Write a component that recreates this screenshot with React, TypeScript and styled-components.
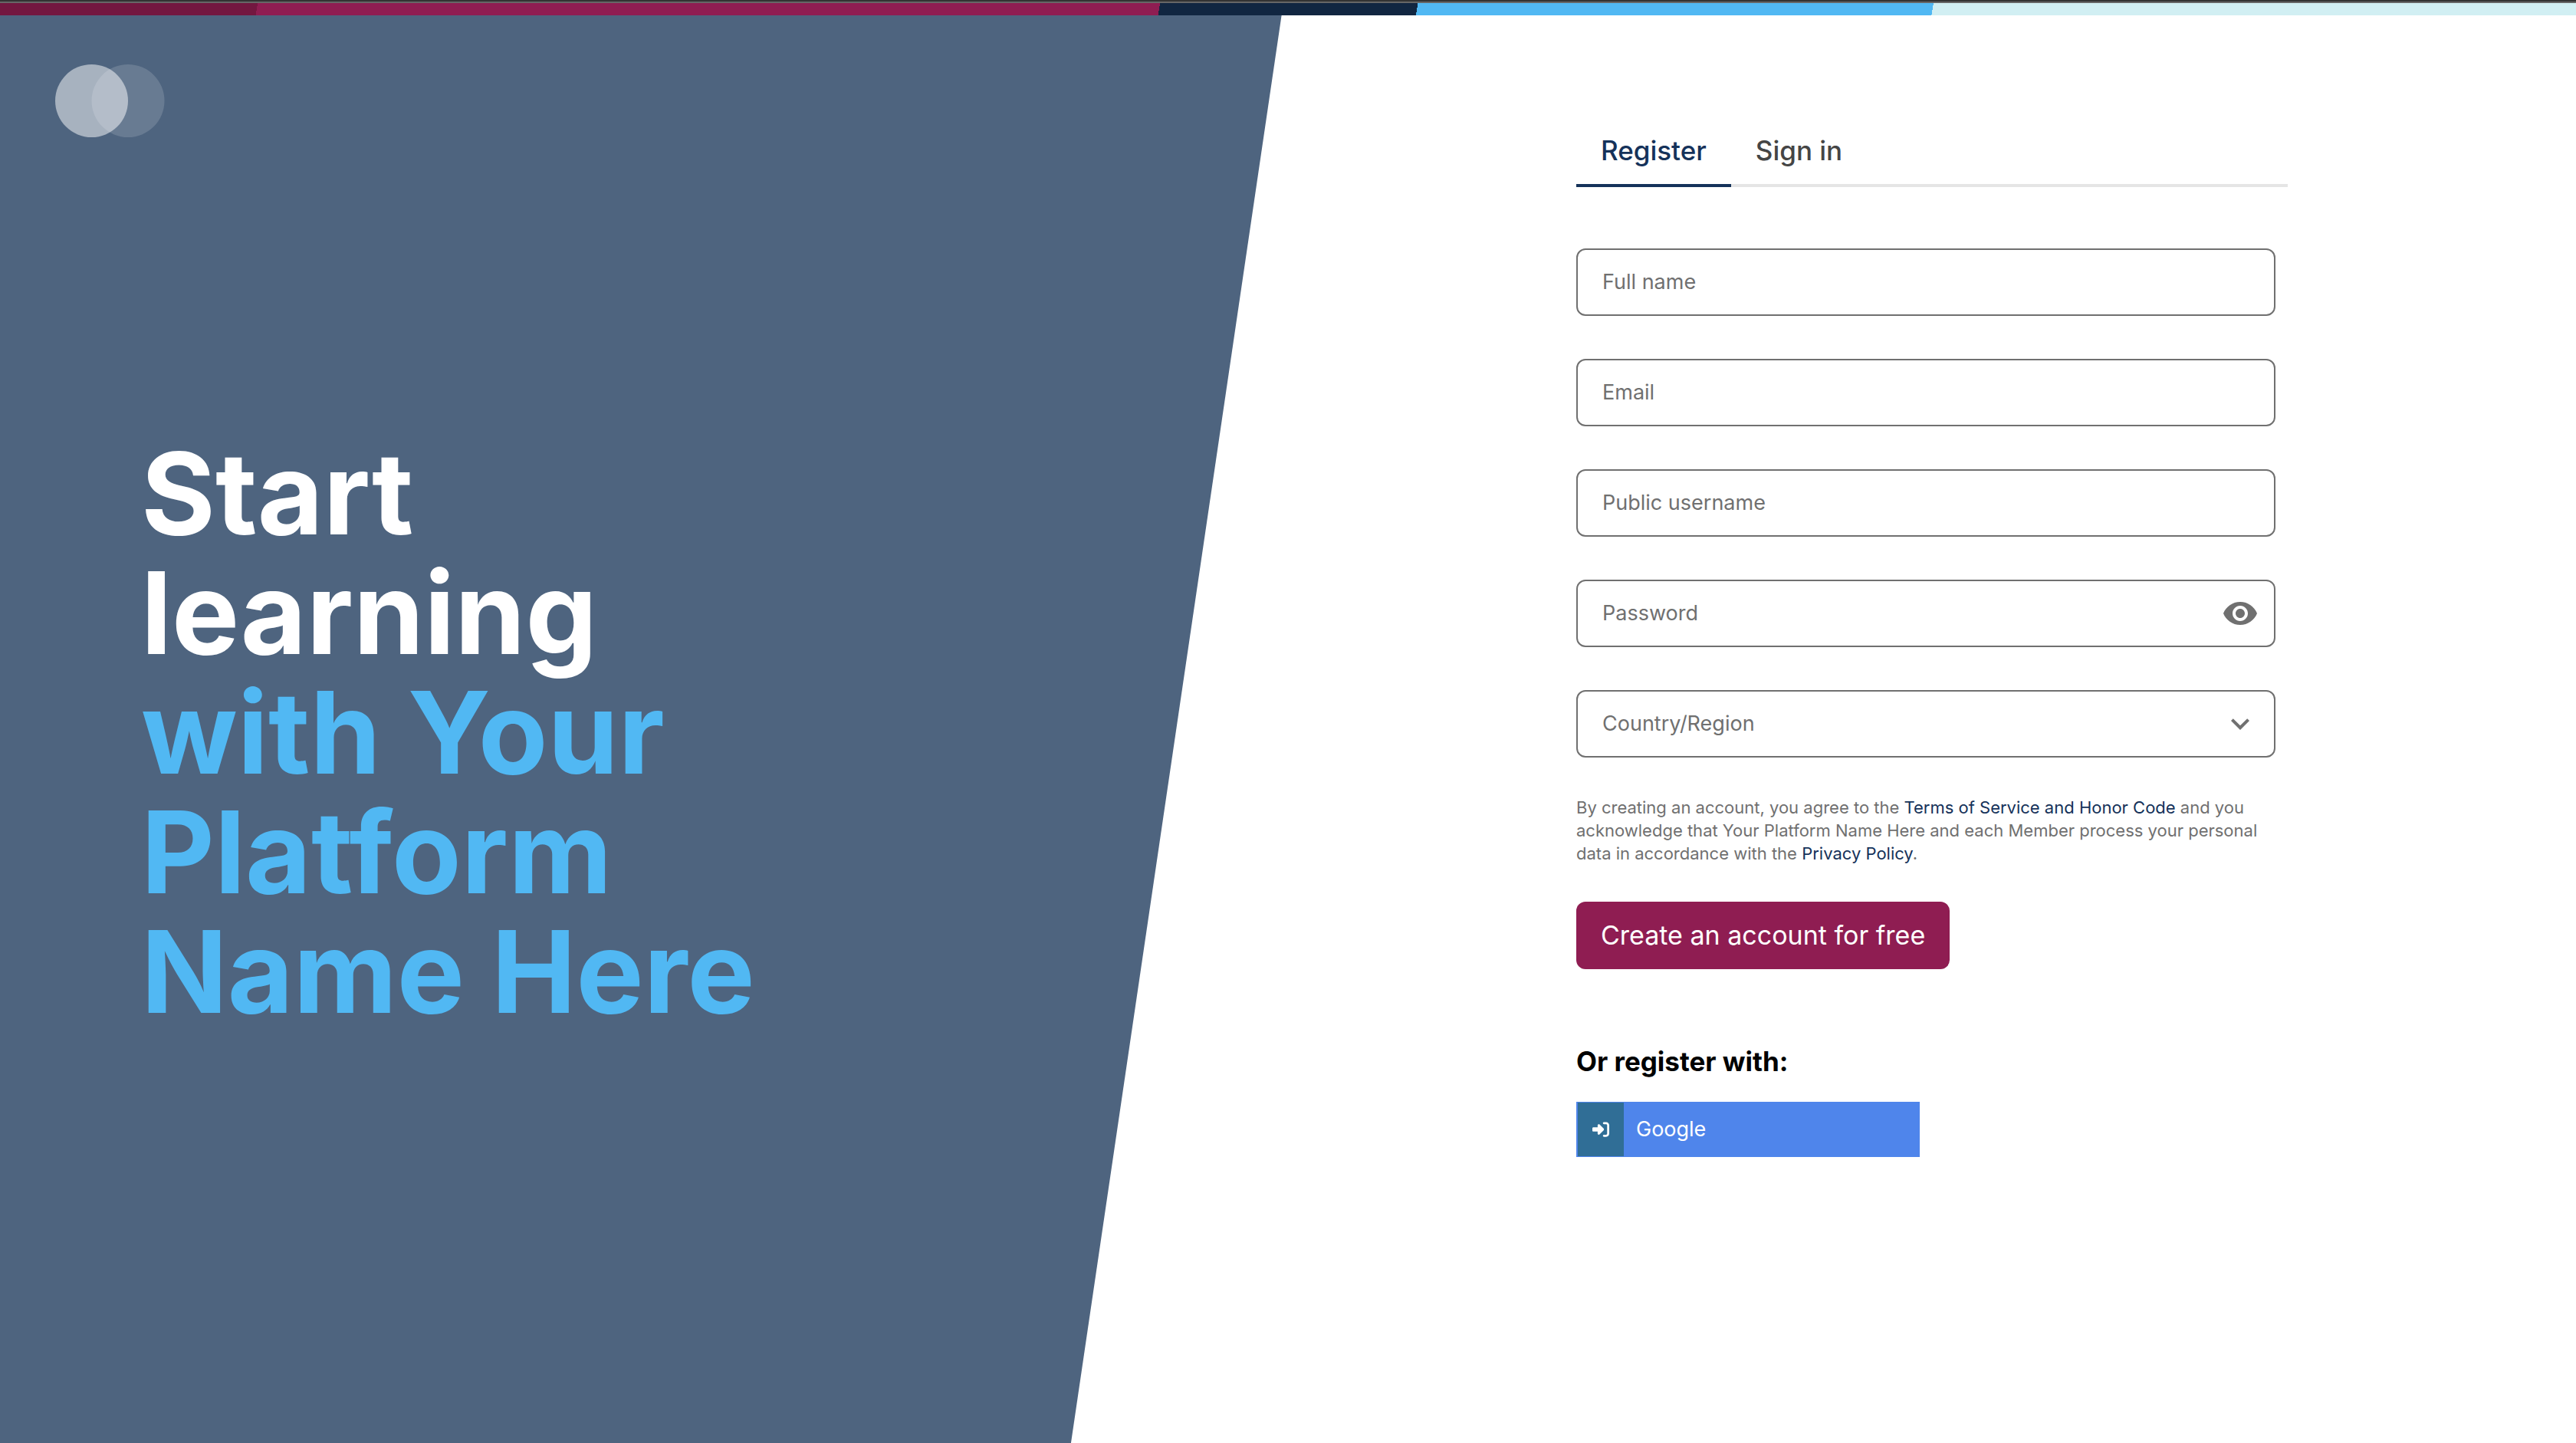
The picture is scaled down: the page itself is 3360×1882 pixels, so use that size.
import React, { useState } from 'react';
import styled, { createGlobalStyle } from 'styled-components';

const color = {
  slate: '#4e647f',
  sky: '#51b8f3',
  navy: '#15325a',
  plum: '#8f1d52',
  grey: '#707070',
};

const GlobalStyle = createGlobalStyle`
  *, *::before, *::after { box-sizing: border-box; }
  body {
    margin: 0;
    background: #ffffff;
    color: #000000;
    font-family: Inter, "Liberation Sans", sans-serif;
    font-size: 27px;
    line-height: 40px;
  }
`;

const Page = styled.div`
  display: flex;
  flex-direction: column;
  min-height: 100vh;
`;

const WindowEdge = styled.div`
  height: 4px;
  background: #666666;
  border-top: 2px solid #333333;
`;

const BrandStripe = styled.div`
  height: 16px;
  background: linear-gradient(
    100deg,
    #731740 10%,
    ${color.plum} 10% 45%,
    #112641 45% 55%,
    ${color.sky} 55% 75%,
    #d1eff3 75%
  );
`;

const Columns = styled.div`
  display: grid;
  grid-template-columns: 1fr 1fr;
  flex: 1;
`;

const Hero = styled.section`
  display: flex;
  flex-direction: column;
  background: ${color.slate};
  clip-path: polygon(0 0, 99.5% 0, 83.15% 100%, 0 100%);
`;

const Logo = styled.svg`
  display: block;
  width: 143px;
  height: 95px;
  margin: 64px 72px 0;
`;

const Headline = styled.h1`
  width: 840px;
  margin: 387px 0 0 184px;
  color: #ffffff;
  font-size: 148px;
  font-weight: 700;
  line-height: 156px;
`;

const Accent = styled.span`
  display: block;
  color: ${color.sky};
`;

const Main = styled.main`
  display: flex;
  justify-content: center;
  padding: 132px 32px 64px;
`;

const Panel = styled.div`
  width: 100%;
  max-width: 928px;
`;

const Tabs = styled.nav`
  display: flex;
  box-shadow: inset 0 -4px #e5e5e5;
`;

const Tab = styled.button<{ $active: boolean }>`
  padding: 16px 32px;
  border: 0;
  border-bottom: 4px solid ${(p) => (p.$active ? color.navy : 'transparent')};
  background: none;
  color: ${(p) => (p.$active ? color.navy : '#454545')};
  font: 500 35px/56px Inter, "Liberation Sans", sans-serif;
  cursor: pointer;
`;

const Form = styled.form`
  display: flex;
  flex-direction: column;
  align-items: flex-start;
  padding: 80px 16px 0 0;
`;

const Fields = styled.div`
  display: grid;
  gap: 56px;
  width: 100%;
`;

const Field = styled.div`
  display: grid;
  grid-template-columns: 1fr auto;
  align-items: center;
  height: 88px;
`;

const FieldLabel = styled.label`
  grid-area: 1 / 1;
  padding-left: 34px;
  color: ${color.grey};
  pointer-events: none;
  z-index: 1;
`;

const controlStyle = `
  grid-area: 1 / 1 / 2 / 3;
  width: 100%;
  height: 88px;
  padding: 0 32px;
  border: 2px solid ${color.grey};
  border-radius: 12px;
  background: #ffffff;
  color: #454545;
  font: 400 27px/40px Inter, "Liberation Sans", sans-serif;
`;

const TextInput = styled.input`
  ${controlStyle}
`;

const Select = styled.select`
  ${controlStyle}
  appearance: none;
`;

const FieldIcon = styled.svg`
  display: block;
  width: 48px;
  height: 48px;
  fill: ${color.grey};
`;

const IconButton = styled.button`
  grid-area: 1 / 2;
  margin-right: 22px;
  padding: 0;
  border: 0;
  background: none;
  cursor: pointer;
  z-index: 1;
`;

const SelectArrow = styled.span`
  grid-area: 1 / 2;
  margin-right: 22px;
  pointer-events: none;
  z-index: 1;
`;

const Legal = styled.p`
  margin: 50px 0 0;
  color: ${color.grey};
  font-size: 22px;
  line-height: 30px;
`;

const LegalLink = styled.a`
  color: ${color.navy};
  text-decoration: none;
`;

const SubmitButton = styled.button`
  height: 88px;
  margin-top: 48px;
  padding: 0 32px;
  border: 0;
  border-radius: 12px;
  background: ${color.plum};
  color: #ffffff;
  font: 400 34px/56px Inter, "Liberation Sans", sans-serif;
  cursor: pointer;
`;

const Subheading = styled.h2`
  margin: 92px 0 0;
  font-size: 35px;
  font-weight: 700;
  line-height: 56px;
`;

const ProviderButton = styled.button`
  display: flex;
  align-items: stretch;
  gap: 16px;
  width: 448px;
  height: 72px;
  margin-top: 25px;
  padding: 1px 2px;
  border: 0;
  background: #4f85eb;
  color: #ffffff;
  font: 400 27px/70px Inter, "Liberation Sans", sans-serif;
  cursor: pointer;
`;

const ProviderIcon = styled.span`
  display: flex;
  align-items: center;
  justify-content: center;
  width: 60px;
  background: #306e96;
`;

const textFields = [
  { id: 'name', label: 'Full name', type: 'text' },
  { id: 'email', label: 'Email', type: 'email' },
  { id: 'username', label: 'Public username', type: 'text' },
];

export default function App() {
  const [tab, setTab] = useState<'register' | 'signin'>('register');
  const [showPassword, setShowPassword] = useState(false);

  return (
    <Page>
      <GlobalStyle />
      <WindowEdge />
      <BrandStripe />
      <Columns>
        <Hero>
          <Logo viewBox="0 0 143 95" role="img" aria-label="Logo">
            <circle cx="95" cy="47.5" r="47.5" fill="#fff" fillOpacity="0.15" />
            <circle cx="47.5" cy="47.5" r="47.5" fill="#fff" fillOpacity="0.5" />
          </Logo>
          <Headline>
            Start
            <br />
            learning
            <Accent>
              with Your
              <br />
              Platform
              <br />
              Name Here
            </Accent>
          </Headline>
        </Hero>
        <Main>
          <Panel>
            <Tabs>
              <Tab type="button" $active={tab === 'register'} onClick={() => setTab('register')}>
                Register
              </Tab>
              <Tab type="button" $active={tab === 'signin'} onClick={() => setTab('signin')}>
                Sign in
              </Tab>
            </Tabs>
            <Form onSubmit={(e) => e.preventDefault()}>
              <Fields>
                {textFields.map((f) => (
                  <Field key={f.id}>
                    <TextInput id={f.id} type={f.type} />
                    <FieldLabel htmlFor={f.id}>{f.label}</FieldLabel>
                  </Field>
                ))}
                <Field>
                  <TextInput id="password" type={showPassword ? 'text' : 'password'} />
                  <FieldLabel htmlFor="password">Password</FieldLabel>
                  <IconButton
                    type="button"
                    aria-label="Show password"
                    onClick={() => setShowPassword(!showPassword)}
                  >
                    <FieldIcon viewBox="0 0 24 24">
                      <path d="M12 4.5C7 4.5 2.73 7.61 1 12c1.73 4.39 6 7.5 11 7.5s9.27-3.11 11-7.5c-1.73-4.39-6-7.5-11-7.5zM12 17c-2.76 0-5-2.24-5-5s2.24-5 5-5 5 2.24 5 5-2.24 5-5 5zm0-8c-1.66 0-3 1.34-3 3s1.34 3 3 3 3-1.34 3-3-1.34-3-3-3z" />
                    </FieldIcon>
                  </IconButton>
                </Field>
                <Field>
                  <Select id="country" defaultValue="">
                    <option value="" />
                  </Select>
                  <FieldLabel htmlFor="country">Country/Region</FieldLabel>
                  <SelectArrow>
                    <FieldIcon viewBox="0 0 24 24">
                      <path d="M16.59 8.59 12 13.17 7.41 8.59 6 10l6 6 6-6z" />
                    </FieldIcon>
                  </SelectArrow>
                </Field>
              </Fields>
              <Legal>
                By creating an account, you agree to the{' '}
                <LegalLink href="#terms">Terms of Service and Honor Code</LegalLink> and you
                acknowledge that Your Platform Name Here and each Member process your personal
                data in accordance with the <LegalLink href="#privacy">Privacy Policy</LegalLink>.
              </Legal>
              <SubmitButton type="submit">Create an account for free</SubmitButton>
              <Subheading>Or register with:</Subheading>
              <ProviderButton type="button">
                <ProviderIcon>
                  <svg width="22" height="22" viewBox="0 0 512 512" fill="#fff">
                    <path d="M217.9 105.9L340.7 228.7c7.2 7.2 11.3 17.1 11.3 27.3s-4.1 20.1-11.3 27.3L217.9 406.1c-6.4 6.4-15 9.9-24 9.9c-18.7 0-33.9-15.2-33.9-33.9l0-62.1L32 320c-17.7 0-32-14.3-32-32l0-64c0-17.7 14.3-32 32-32l128 0 0-62.1c0-18.7 15.2-33.9 33.9-33.9c9 0 17.6 3.6 24 9.9zM352 416l64 0c17.7 0 32-14.3 32-32l0-256c0-17.7-14.3-32-32-32l-64 0c-17.7 0-32-14.3-32-32s14.3-32 32-32l64 0c53 0 96 43 96 96l0 256c0 53-43 96-96 96l-64 0c-17.7 0-32-14.3-32-32s14.3-32 32-32z" />
                  </svg>
                </ProviderIcon>
                Google
              </ProviderButton>
            </Form>
          </Panel>
        </Main>
      </Columns>
    </Page>
  );
}
